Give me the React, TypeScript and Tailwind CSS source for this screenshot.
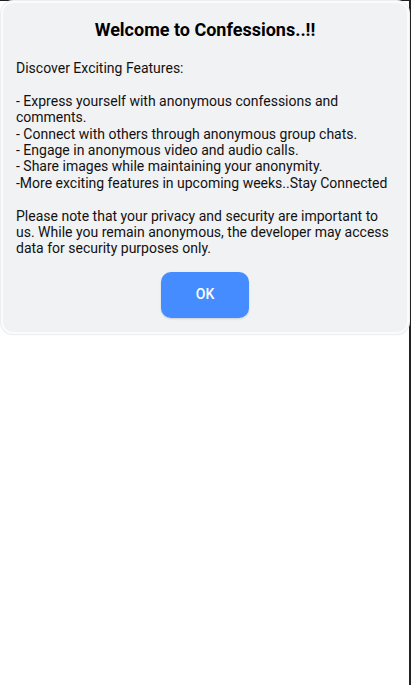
import React from "react";

export default function App() {
  const body = `Discover Exciting Features:

- Express yourself with anonymous confessions and comments.
- Connect with others through anonymous group chats.
- Engage in anonymous video and audio calls.
- Share images while maintaining your anonymity.
-More exciting features in upcoming weeks..Stay Connected

Please note that your privacy and security are important to us. While you remain anonymous, the developer may access data for security purposes only.`;
  return (
    <div
      className="min-h-[685px] bg-white border-t border-r-2 border-[#222222]"
      style={{ fontFamily: "Roboto, 'Noto Sans', sans-serif" }}
    >
      <div className="ml-[1px] rounded-[12px] border-2 border-[#fbfbfb] bg-[#f1f2f4] px-[13px] pt-[15px] pb-[14px] shadow-[0_0_0_1px_#eceef0,0_1px_2px_rgba(0,0,0,0.06)]">
        <h1 className="text-center text-[18px] leading-[24px] font-bold text-black">
          Welcome to Confessions..!!
        </h1>
        <p className="mt-[18px] whitespace-pre-line text-[14px] leading-[1.172] text-[#111111]">
          {body}
        </p>
        <div className="mt-[15px] flex justify-center">
          <button className="h-[46px] w-[88px] rounded-[10px] bg-[#448cff] text-[14px] font-medium text-white shadow-[0_1px_2px_rgba(0,0,0,0.15)]">
            OK
          </button>
        </div>
      </div>
    </div>
  );
}
